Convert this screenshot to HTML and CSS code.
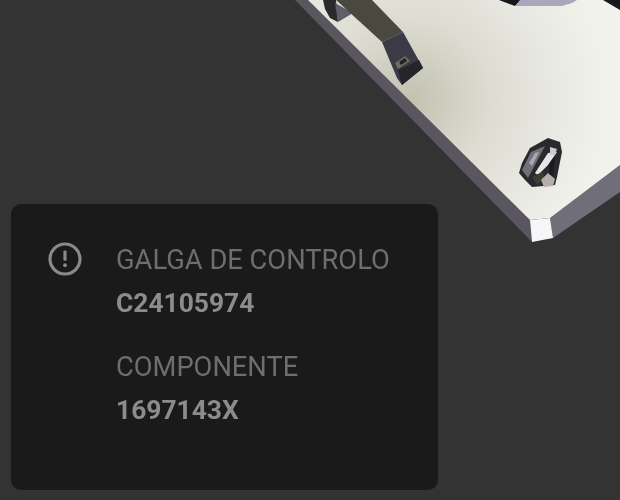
FILE: index.html
```html
<!DOCTYPE html>
<html lang="pt">
<head>
<meta charset="utf-8">
<title>Galga de controlo</title>
<link rel="stylesheet" href="styles.css">
</head>
<body>
<main class="stage">
  <svg class="model" width="620" height="500" viewBox="0 0 620 500" aria-hidden="true">
    <defs>
      <radialGradient id="plate" gradientUnits="userSpaceOnUse" cx="410" cy="100" r="200">
        <stop offset="0" stop-color="#c2c2b0"/>
        <stop offset="0.4" stop-color="#dcdcd2"/>
        <stop offset="0.7" stop-color="#e8e8e2"/>
        <stop offset="1" stop-color="#f2f2ed"/>
      </radialGradient>
      <filter id="soft" x="-5%" y="-5%" width="110%" height="110%"><feGaussianBlur stdDeviation="0.6"/></filter>
    </defs>
    <g filter="url(#soft)">
      <polygon fill="#5a5660" points="295,0 308,0 530,220 532,242"/>
      <polygon fill="#706e78" points="550,218 620,165 620,192 553,238"/>
      <polygon fill="url(#plate)" points="308,0 620,0 620,165 550,218 530,220"/>
      <polygon fill="#f6f6f8" points="530,220 550,218 553,238 532,242"/>

      <polygon fill="#15151a" points="499,0 515,6 522,0"/>
      <polygon fill="#a9a7bc" points="520,0 577,0 572,3 562,6 515,6"/>
      <polygon fill="#17171a" points="603,0 620,0 620,10"/>

      <polygon fill="#2a2a2e" points="323,0 336,0 338,22 330,18 325,9"/>
      <polygon fill="#5f5e68" points="335,3 353,13 338,22"/>
      <polygon fill="#4a4a40" points="336,0 372,0 403,32 382,42"/>
      <polygon fill="#3a3a46" points="382,42 403,32 423,68 402,85 397,78"/>
      <polygon fill="#26262c" points="398,70 419,60 423,68 402,85"/>
      <polygon fill="#6e6e60" points="395,63 405,56 410,61 398,69"/>
      <polygon fill="#222226" points="399,62 405,58 407,61 401,65"/>

      <polygon fill="#2a2a2e" points="519,173 522,163 530,148 548,138 560,142 562,152 557,177 555,185 532,187 525,180"/>
      <polygon fill="#70707a" points="522,170 531,152 545,146 528,178"/>
      <polygon fill="#a8a8b0" points="529,163 535,153 539,152 532,166"/>
      <polygon fill="#e6e6e8" points="535,173 548,153 557,152 548,165 538,175"/>
      <polygon fill="#cccccf" points="550,147 557,149 555,155 550,155"/>
      <polygon fill="#3e3e30" points="532,177 542,172 545,177 537,185"/>
      <polygon fill="#b5aeae" points="541,180 548,173 555,179 553,186 544,187"/>
      <polygon fill="#1b1b1d" points="549,164 555,156 553,176 549,174"/>
    </g>
  </svg>
  <section class="card">
    <svg class="card-icon" width="34" height="34" viewBox="0 0 34 34" aria-hidden="true">
      <circle class="ring" cx="17" cy="17" r="15"/>
      <rect class="mark" x="15.4" y="8.4" width="3.2" height="10.4" rx="1.2"/>
      <circle class="mark" cx="17" cy="23.2" r="1.9"/>
    </svg>
    <div class="fields">
      <div class="field">
        <div class="label">GALGA DE CONTROLO</div>
        <div class="value">C24105974</div>
      </div>
      <div class="field">
        <div class="label">COMPONENTE</div>
        <div class="value">1697143X</div>
      </div>
    </div>
  </section>
</main>
</body>
</html>
```
FILE: styles.css
```css
html, body {
  margin: 0;
  height: 100%;
  overflow: hidden;
  background: #333333;
}

.stage {
  position: relative;
  box-sizing: border-box;
  width: 620px;
  height: 500px;
  padding: 204px 182px 10px 11px;
  font-family: Roboto, "Liberation Sans", sans-serif;
}

.model {
  position: absolute;
  left: 0;
  top: 0;
}

.card {
  position: relative;
  box-sizing: border-box;
  height: 286px;
  padding: 39px 16px 0 37px;
  display: flex;
  gap: 34px;
  background: #1a1a1a;
  border-radius: 10px;
}

.card-icon {
  flex: none;
  margin-top: -1px;
}

.ring {
  fill: none;
  stroke: #8a8a8a;
  stroke-width: 3.2;
}

.mark {
  fill: #8a8a8a;
}

.fields {
  display: flex;
  flex-direction: column;
  gap: 30px;
  transform: translateZ(0);
}

.label {
  font-size: 27.3px;
  line-height: 34px;
  color: #6e6e6e;
}

.value {
  margin-top: 9px;
  font-size: 26.4px;
  line-height: 34px;
  font-weight: 700;
  color: #8c8c8c;
}
```
